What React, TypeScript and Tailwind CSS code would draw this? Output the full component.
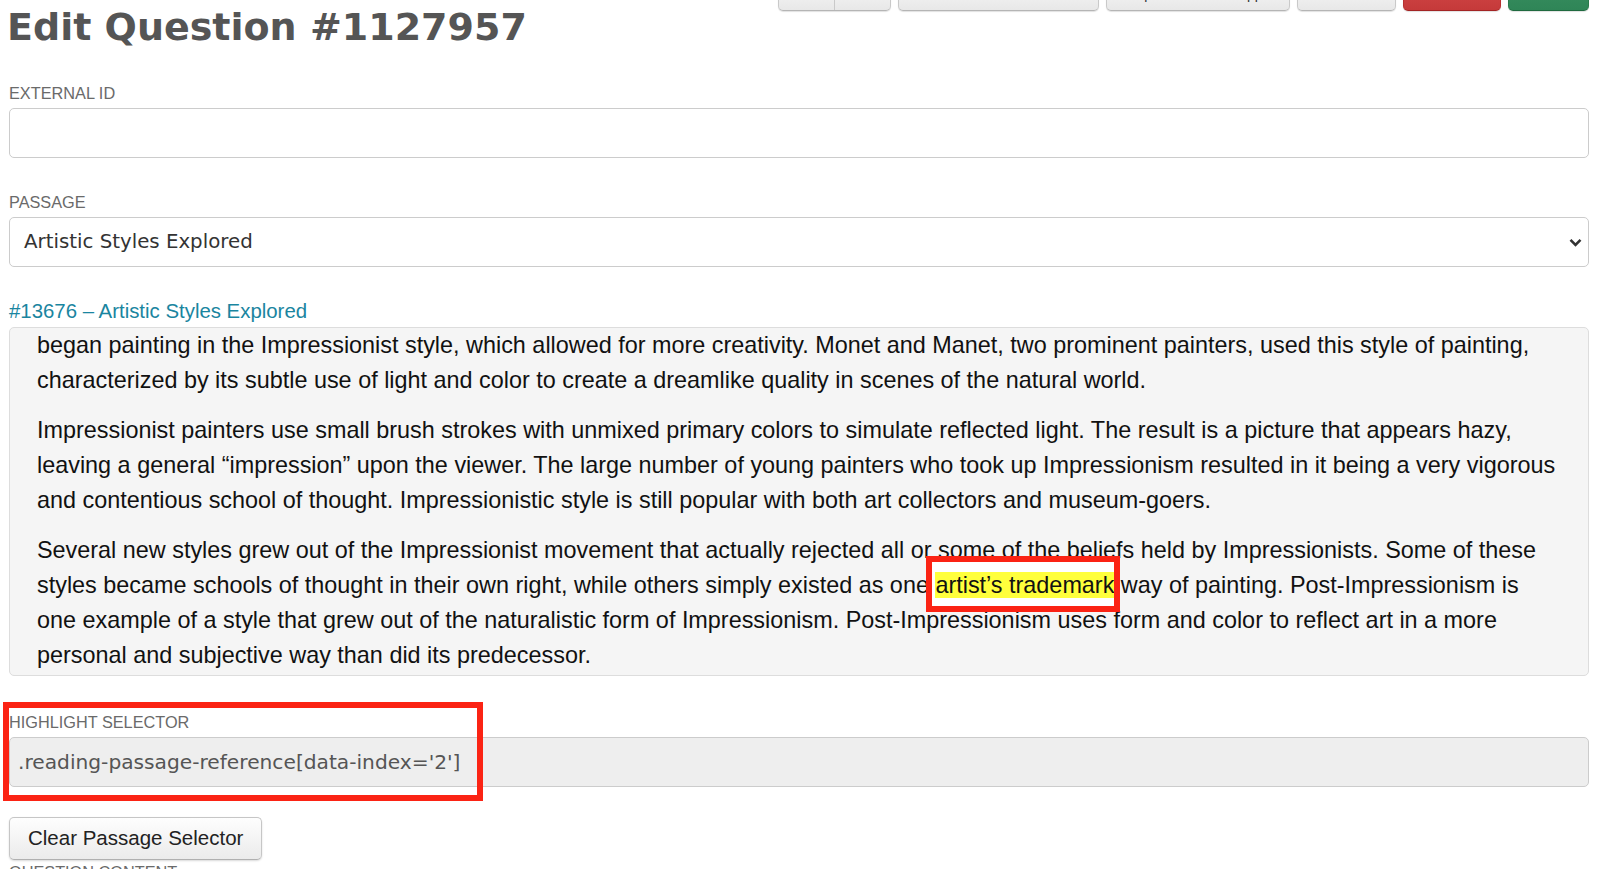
import React from 'react';

const TopButton = ({ label, className }: { label: string; className: string }) => (
  <button
    className={`h-[35px] rounded-[5px] border text-[14px] leading-[35px] shadow-[0_1px_1px_rgba(0,0,0,0.12)] ${className}`}
  >
    {label}
  </button>
);

const FieldLabel = ({ children }: { children: React.ReactNode }) => (
  <label className="block h-[20px] text-[16.3px] leading-[20px] uppercase text-[#6a6a6a]">{children}</label>
);

const grayBtn =
  'bg-gradient-to-b from-[#fafafa] to-[#e8e8e8] border-[#c9c9c9] border-b-[#b5b5b5] text-[#333]';

export default function App() {
  return (
    <div className="h-screen overflow-hidden bg-white pl-[9px] pr-[11px] font-['Liberation_Sans',Arial,sans-serif]">
      {/* Header */}
      <div className="flex items-start justify-between pt-[5px]">
        <h1 className="-ml-[2px] h-[44px] font-['DejaVu_Sans',sans-serif] text-[38px] font-bold leading-[44px] text-[#555]">
          Edit Question #1127957
        </h1>
        <div className="-mt-[29px] flex gap-[7px]">
          <div className={`flex h-[35px] w-[113px] overflow-hidden rounded-[5px] border shadow-[0_1px_1px_rgba(0,0,0,0.12)] ${grayBtn}`}>
            <span className="flex-1 border-r border-[#c9c9c9] text-center text-[14px] leading-[33px]">‹</span>
            <span className="flex-1 text-center text-[14px] leading-[33px]">›</span>
          </div>
          <TopButton label="Archive" className={`w-[201px] ${grayBtn}`} />
          <TopButton label="Open in Student App" className={`w-[184px] ${grayBtn}`} />
          <TopButton label="Clone" className={`w-[99px] ${grayBtn}`} />
          <TopButton
            label="Delete"
            className="w-[98px] border-[#b83030] border-b-[#a32424] bg-gradient-to-b from-[#d44a4a] to-[#c53a3a] text-white"
          />
          <TopButton
            label="Save"
            className="w-[81px] border-[#2a7a4c] border-b-[#1f6a3f] bg-gradient-to-b from-[#3a9162] to-[#2f8557] text-white"
          />
        </div>
      </div>

      {/* External ID */}
      <div className="mt-[34px]">
        <FieldLabel>External ID</FieldLabel>
        <div className="mt-[5px] h-[50px] rounded-[5px] border border-[#cccccc] bg-white" />
      </div>

      {/* Passage */}
      <div className="mt-[34px]">
        <FieldLabel>Passage</FieldLabel>
        <div className="mt-[5px] flex h-[50px] items-center justify-between rounded-[5px] border border-[#cccccc] bg-white pl-[14px] pr-[5px]">
          <span className="font-['DejaVu_Sans',sans-serif] text-[19.8px] text-[#333]">Artistic Styles Explored</span>
          <svg width="13" height="9" viewBox="0 0 13 9" className="mr-[1px]">
            <path d="M1.5 1.8 L6.5 6.8 L11.5 1.8" fill="none" stroke="#333" strokeWidth="2.6" />
          </svg>
        </div>
      </div>

      {/* Passage link */}
      <a className="mt-[32px] block h-[24px] text-[20.4px] leading-[24px] text-[#1a85a0]">
        #13676 – Artistic Styles Explored
      </a>

      {/* Passage text */}
      <div className="relative z-0 mt-[4px] h-[349px] overflow-hidden rounded-[5px] border border-[#dddddd] bg-[#f5f5f5] pl-[27px] pr-[18px] text-[23.4px] leading-[35px] text-[#111]">
        <p className="mb-[15px]">
          began painting in the Impressionist style, which allowed for more creativity. Monet and Manet, two prominent
          painters, used this style of painting,
          <br />
          characterized by its subtle use of light and color to create a dreamlike quality in scenes of the natural world.
        </p>
        <p className="mb-[15px]">
          Impressionist painters use small brush strokes with unmixed primary colors to simulate reflected light. The
          result is a picture that appears hazy,
          <br />
          leaving a general “impression” upon the viewer. The large number of young painters who took up Impressionism
          resulted in it being a very vigorous
          <br />
          and contentious school of thought. Impressionistic style is still popular with both art collectors and
          museum-goers.
        </p>
        <p>
          Several new styles grew out of the Impressionist movement that actually rejected all or some of the beliefs held
          by Impressionists. Some of these
          <br />
          styles became schools of thought in their own right, while others simply existed as one{' '}
          <span className="relative bg-[#ffff3c]">
            <span className="absolute -bottom-[14px] -left-[9px] -right-[6px] -top-[16px] -z-10 bg-white" />
            artist’s trademark
            <span className="pointer-events-none absolute -bottom-[14px] -left-[9px] -right-[6px] -top-[16px] z-10 border-[6px] border-[#fb2314]" />
          </span>{' '}
          way of painting. Post-Impressionism is
          <br />
          one example of a style that grew out of the naturalistic form of Impressionism. Post-Impressionism uses form and
          color to reflect art in a more
          <br />
          personal and subjective way than did its predecessor.
        </p>
      </div>

      {/* Highlight selector */}
      <div className="relative mt-[36px]">
        <FieldLabel>Highlight Selector</FieldLabel>
        <div className="mt-[5px] flex h-[50px] items-center rounded-[5px] border border-[#cccccc] bg-[#eeeeee] pl-[8px]">
          <span className="font-['DejaVu_Sans',sans-serif] text-[20.2px] text-[#555]">
            .reading-passage-reference[data-index='2']
          </span>
        </div>
        <div className="pointer-events-none absolute -left-[6px] -top-[10px] h-[99px] w-[480px] border-[6px] border-[#fb2314]" />
      </div>

      {/* Clear button */}
      <button className="mt-[30px] h-[43px] rounded-[5px] border border-[#c6c6c6] border-b-[#b0b0b0] bg-gradient-to-b from-[#fefefe] to-[#ebebeb] px-[18px] text-[20.5px] text-[#222] shadow-[0_1px_2px_rgba(0,0,0,0.15)]">
        Clear Passage Selector
      </button>

      {/* Question content */}
      <div className="mt-[2px]">
        <FieldLabel>Question Content</FieldLabel>
        <div className="mt-[5px] h-[160px] rounded-[5px] border border-[#cccccc] bg-white" />
      </div>
    </div>
  );
}
